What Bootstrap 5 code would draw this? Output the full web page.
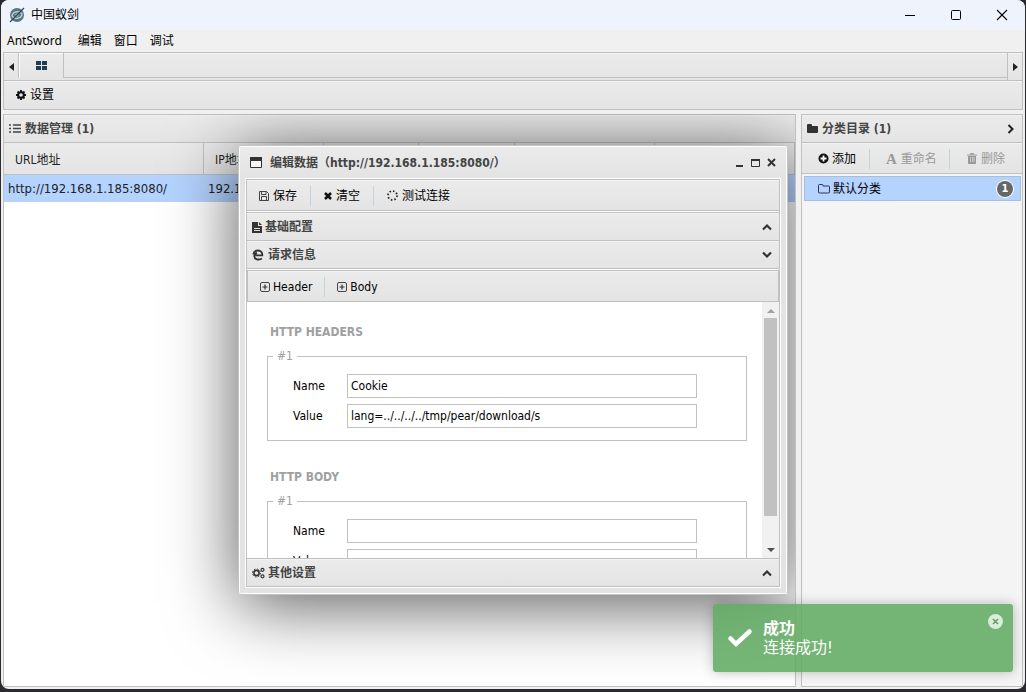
<!DOCTYPE html>
<html lang="zh-CN">
<head>
<meta charset="utf-8">
<meta name="viewport" content="width=device-width, initial-scale=1">
<title>中国蚁剑</title>
<link href="https://cdn.jsdelivr.net/npm/bootstrap@5.3.0/dist/css/bootstrap.min.css" rel="stylesheet">
<style>
:root{--line:#c0c0c0;--sel:#b5d3ff;--ink:#333}
body{background:#2b2b2f;color:#000;font:12px/16px "DejaVu Sans Condensed","Noto Sans CJK SC",sans-serif;height:100vh;overflow:hidden}
svg{display:block;flex:none}
button{background:none;border:0;padding:0;color:inherit;display:flex;align-items:center}
button:disabled{color:#999}
.app-window{background:#f0f0f0;border-radius:8px;overflow:hidden;margin:0 1px 3px}
.app-title{background:#eff3fb;height:30px;font-family:"Noto Sans","Noto Sans CJK SC",sans-serif}
.app-title button{width:46px;height:30px;justify-content:center}
.app-menu{height:22px;gap:12px;padding:0 6px;font-family:"Noto Sans","Noto Sans CJK SC",sans-serif}
.bar{background:linear-gradient(#ebebeb,#e4e4e4);border:1px solid var(--line);box-shadow:inset 0 1px #f3f3f3}
.tab-strip{height:29px}
.tab-arrow{width:15px;justify-content:center}
.tab-on{width:45px;border-left:1px solid #fff;border-right:1px solid var(--line);box-shadow:-1px 0 var(--line),inset 0 1px #fff;justify-content:center;height:25px}
.tab-fill{border-bottom:1px solid var(--line);height:25px}
.tool{height:29px;padding-left:12px}
.hd{height:29px;font-weight:700;color:#444;padding:1px 5px 0}
.pane{border:1px solid var(--line);border-top:0;min-height:0}
.pane>.hd{margin:0 -1px}
.side{width:222px;background:#f4f4f4}
.sep{width:1px;height:20px;background:#bcd8de;flex:none}
.grid{table-layout:fixed;width:100%;border-collapse:separate;border-spacing:0;font-size:13px}
.grid th{font:12px/16px "DejaVu Sans Condensed","Noto Sans CJK SC",sans-serif;height:32px;padding:2px 11px 0;background:linear-gradient(#ebebeb,#e4e4e4);border-right:1px solid var(--line);border-bottom:1px solid var(--line);color:#222}
.grid td{background:var(--sel);height:27px;padding:0 4px;color:#222}
.cat{background:var(--sel);border:1px solid #a9bedb;height:25px;padding:0 7px 0 13px;margin:2px 1px 0 2px}
.count{width:16px;height:16px;background:#666;box-shadow:0 0 0 1px #fff;border-radius:8px;color:#fff;font-size:11px;font-weight:700;line-height:16px;text-align:center}
.dlg{left:234px;top:31px;width:550px;height:450px;background:linear-gradient(#ebebeb,#e3e3e3 34px);border:1px solid #c4c4c4;border-radius:3px;box-shadow:inset 0 0 0 1px #fff,0 10px 70px rgba(0,0,0,.65);padding:0 7px 7px}
.dlg-title{height:33px;padding:0 4px;color:#444;font-weight:700}
.dlg-title button{margin-left:7px}
.dlg-body{outline:1px solid #fff;background:#fff;border:1px solid var(--line);min-height:0}
.dlg-body>.bar{margin:0 -1px}
.dlg-body>.bar:first-child{margin-top:-1px}
.dlg .tool{height:32px;padding-top:1px}
.dlg .hd{padding-right:7px}
.form-area{overflow:hidden;padding:22px 15px 0 20px}
.form-area h2{font-size:12px;line-height:16px;font-weight:700;color:#a0a0a0;margin:0 0 8px 3px}
.form-area fieldset{border:1px solid var(--line);padding:10px 25px 12px;margin-bottom:28px;height:93px}
.form-area legend{float:none;width:auto;font-size:12px;line-height:16px;color:#a0a0a0;padding:0 4px;margin:0 0 0 -20px}
.field{height:24px;margin-bottom:6px}
.field label{width:54px;flex:none}
.field input{width:350px;height:24px;border:1px solid var(--line);border-radius:0;padding:0 3px;font-size:12px;color:#000;background:#fff}
.sb{width:17px;background:#f1f1f1;padding:7px 0 6px}
.sb i{width:13px;height:198px;background:#c1c1c1;margin-top:5px}
.done{right:12px;bottom:17px;width:300px;height:68px;background:rgba(96,170,96,.87);border-radius:3px;box-shadow:0 0 12px rgba(0,0,0,.25);color:#fff;font-size:16px;line-height:19px;padding:0 10px 0 14px}
</style>
</head>
<body class="d-flex flex-column">
<svg width="0" height="0" class="position-absolute"><defs>
<symbol id="up" viewBox="0 0 10 8"><path d="M1 6.500 5 2.500 9 6.500" fill="none" stroke="#333" stroke-width="2.200"/></symbol>
<symbol id="plus" viewBox="0 0 10 10"><rect x=".5" y=".5" width="9" height="9" rx="1.500" fill="none" stroke="#444"/><path d="M5 2.500v5M2.500 5h5" stroke="#333" stroke-width="1.200"/></symbol>
</defs></svg>
<div class="app-window d-flex flex-column flex-grow-1 position-relative">
  <header class="app-title d-flex align-items-center flex-shrink-0">
    <svg class="ms-2" width="16" height="16" viewBox="0 0 16 16"><circle cx="8" cy="8" r="7" fill="#567783"/><path d="M3 9.500c0-5 7-6.500 9.500-3M13 6.500c0 5-7 6.500-9.500 3" fill="none" stroke="#c6d3d8" stroke-width="1.300"/><circle cx="8" cy="8" r="1.800" fill="#a9bdc4"/><path d="M1 15 15 1" stroke="#33444c" stroke-width="1.200"/></svg>
    <span class="flex-grow-1" style="padding-left:6px">中国蚁剑</span>
    <button aria-label="最小化"><svg width="12" height="12"><path d="M1 6.500h10" stroke="#000"/></svg></button>
    <button aria-label="最大化"><svg width="12" height="12"><rect x="1.500" y="1.500" width="9" height="9" rx="1" fill="none" stroke="#000"/></svg></button>
    <button aria-label="关闭"><svg width="12" height="12"><path d="M1 1 11 11M11 1 1 11" stroke="#000" stroke-width="1.100"/></svg></button>
  </header>
  <nav class="app-menu d-flex align-items-center flex-shrink-0">
    <button>AntSword</button><button class="ms-1">编辑</button><button>窗口</button><button>调试</button>
  </nav>
  <main class="d-flex flex-column flex-grow-1" style="margin:0 2px 2px;min-height:0">
    <div class="bar tab-strip d-flex flex-shrink-0">
      <button class="tab-arrow" aria-label="左"><svg width="5" height="8"><path d="M5 0v8L0 4z" fill="#222"/></svg></button>
      <button class="tab-on" aria-label="主页"><svg width="12" height="10"><path d="M0 0h5v4H0zM6 0h5v4H6zM0 5h5v4H0zM6 5h5v4H6z" fill="#1f3c52"/></svg></button>
      <div class="tab-fill flex-grow-1"></div>
      <button class="tab-arrow" style="border-left:1px solid var(--line)" aria-label="右"><svg width="5" height="8"><path d="M0 0v8l5-4z" fill="#222"/></svg></button>
    </div>
    <div class="bar tool d-flex flex-shrink-0 border-top-0">
      <button style="gap:4px"><svg width="10" height="10" viewBox="0 0 10 10"><circle cx="5" cy="5" r="2.800" fill="none" stroke="#111" stroke-width="2"/><path d="M5 0v2M5 8v2M0 5h2M8 5h2M1.500 1.500l1.300 1.300M7.200 7.200l1.300 1.300M8.500 1.500 7.200 2.800M2.800 7.200 1.500 8.500" stroke="#111" stroke-width="1.900"/></svg>设置</button>
    </div>
    <div class="d-flex flex-grow-1" style="gap:5px;margin-top:4px;min-height:0">
      <section class="pane flex-grow-1 bg-white position-relative overflow-hidden" style="min-width:0">
        <div class="bar hd d-flex align-items-center gap-1">
          <svg width="12" height="10"><path d="M0 1h2M0 4.500h2M0 8h2M4 1h8M4 4.500h8M4 8h8" stroke="#444" stroke-width="1.600"/></svg>数据管理 (1)
        </div>
        <table class="grid"><colgroup><col style="width:200px"><col style="width:120px"><col style="width:95px"><col style="width:96px"><col style="width:140px"><col></colgroup>
          <thead><tr><th>URL地址</th><th>IP地址</th><th></th><th></th><th></th><th></th></tr></thead>
          <tbody><tr><td>http://192.168.1.185:8080/</td><td>192.168.1.185</td><td></td><td></td><td></td><td></td></tr></tbody>
        </table>

        <div class="dlg position-absolute d-flex flex-column" role="dialog" aria-label="编辑数据">
          <div class="dlg-title d-flex align-items-center flex-shrink-0">
            <svg width="12" height="11"><path d="M.5.5h11v10H.5z" fill="#f5f5f5" stroke="#333"/><path d="M0 0h12v4H0z" fill="#333"/></svg>
            <span class="flex-grow-1 text-nowrap" style="padding-left:8px">编辑数据（http://192.168.1.185:8080/）</span>
            <button aria-label="折叠"><svg width="8" height="9"><path d="M0 8h7" stroke="#333" stroke-width="2"/></svg></button>
            <button aria-label="放大"><svg width="9" height="8"><path d="M.5 1h8v6.500h-8z" fill="none" stroke="#333"/><path d="M0 1h9" stroke="#333" stroke-width="2"/></svg></button>
            <button aria-label="关闭对话框"><svg width="9" height="9"><path d="M1 1 8 8M8 1 1 8" stroke="#333" stroke-width="2"/></svg></button>
          </div>
          <div class="dlg-body d-flex flex-column flex-grow-1">
            <div class="bar tool d-flex align-items-center flex-shrink-0">
              <button style="gap:4px"><svg width="10" height="10"><path d="M.5.5h7l2 2v7h-9zM2.500.500v3h4.500v-3M2.500 9.500v-4h5v4" fill="none" stroke="#444"/></svg>保存</button>
              <span class="sep" style="margin:0 13px"></span>
              <button style="gap:4px"><svg width="8" height="8"><path d="M1 1 7 7M7 1 1 7" stroke="#111" stroke-width="2.600"/></svg>清空</button>
              <span class="sep" style="margin:0 13px"></span>
              <button style="gap:4px"><svg width="11" height="11"><circle cx="5.500" cy="5.500" r="4.500" fill="none" stroke="#222" stroke-width="1.800" stroke-dasharray="1.500 2.030"/></svg>测试连接</button>
            </div>
            <div class="bar hd d-flex align-items-center flex-shrink-0" style="margin-top:1px">
              <svg width="10" height="11"><path d="M0 0h6v4h4v7H0zM7 0l3 3H7z" fill="#333"/><path d="M2 6.500h6M2 8.500h6" stroke="#ddd"/></svg>
              <span class="flex-grow-1" style="padding-left:3px">基础配置</span><svg width="10" height="8"><use href="#up"/></svg>
            </div>
            <div class="bar hd d-flex align-items-center flex-shrink-0 border-top-0" style="height:28px">
              <svg width="12" height="12" viewBox="0 0 12 12"><path d="M1.200 5.500C1.800 3 3.800 1.500 6 1.500c2.800 0 4.500 2 4.300 4.800H3.500M10 9.500C6.500 11.500 2.300 10.300 2.300 7.200c0-1.800 1.200-2.900 2.700-3.400" fill="none" stroke="#333" stroke-width="1.800"/></svg>
              <span class="flex-grow-1" style="padding-left:4px">请求信息</span><svg width="10" height="8"><g transform="rotate(180 5 4)"><use href="#up"/></g></svg>
            </div>
            <div class="bar tool d-flex align-items-center flex-shrink-0" style="margin:1px 0 0 0">
              <button style="gap:3px"><svg width="10" height="10"><use href="#plus"/></svg>Header</button>
              <span class="sep" style="margin:0 12px"></span>
              <button style="gap:3px"><svg width="10" height="10"><use href="#plus"/></svg>Body</button>
            </div>
            <div class="d-flex flex-grow-1" style="min-height:0">
              <form class="form-area flex-grow-1">
                <h2>HTTP HEADERS</h2>
                <fieldset><legend>#1</legend>
                  <div class="field d-flex align-items-center"><label for="hn">Name</label><input id="hn" value="Cookie"></div>
                  <div class="field d-flex align-items-center"><label for="hv">Value</label><input id="hv" value="lang=../../../../tmp/pear/download/s"></div>
                </fieldset>
                <h2>HTTP BODY</h2>
                <fieldset><legend>#1</legend>
                  <div class="field d-flex align-items-center"><label for="bn">Name</label><input id="bn"></div>
                  <div class="field d-flex align-items-center"><label for="bv">Value</label><input id="bv"></div>
                </fieldset>
              </form>
              <div class="sb d-flex flex-column align-items-center">
                <svg width="8" height="4"><path d="M0 4h8L4 0z" fill="#a0a0a0"/></svg><i></i>
                <svg width="8" height="4" class="mt-auto"><path d="M0 0h8L4 4z" fill="#505050"/></svg>
              </div>
            </div>
            <div class="bar hd d-flex align-items-center flex-shrink-0" style="margin-bottom:-1px">
              <svg width="13" height="12"><circle cx="4.500" cy="6" r="2.600" fill="none" stroke="#333" stroke-width="1.600"/><circle cx="4.500" cy="6" r="4" fill="none" stroke="#333" stroke-dasharray="1.500 1.640"/><circle cx="10.500" cy="2.800" r="1.500" fill="none" stroke="#333" stroke-width="1.200"/><circle cx="10.500" cy="9.300" r="1.500" fill="none" stroke="#333" stroke-width="1.200"/></svg>
              <span class="flex-grow-1" style="padding-left:3px">其他设置</span><svg width="10" height="8"><use href="#up"/></svg>
            </div>
          </div>
        </div>
      </section>

      <section class="pane side flex-shrink-0">
        <div class="bar hd d-flex align-items-center" style="padding-right:7px">
          <svg width="12" height="10"><path d="M0 1q0-1 1-1h3q1 0 1 1v1h5q1 0 1 1v5q0 1-1 1H1q-1 0-1-1z" fill="#333"/></svg>
          <span class="flex-grow-1" style="padding-left:3px">分类目录 (1)</span><svg width="8" height="10"><path d="M1.500 1 5.500 5 1.500 9" fill="none" stroke="#222" stroke-width="2"/></svg>
        </div>
        <div class="bar d-flex align-items-center border-top-0 border-start-0 border-end-0" style="height:31px;padding:1px 0 0 16px">
          <button style="gap:3px"><svg width="11" height="11"><circle cx="5.500" cy="5.500" r="5" fill="#111"/><path d="M5.500 2.500v6M2.500 5.500h6" stroke="#fff" stroke-width="1.800"/></svg>添加</button>
          <span class="sep" style="margin:0 16px 0 13px"></span>
          <button disabled style="gap:4px"><b style="font:700 15px/16px 'Liberation Serif',serif">A</b>重命名</button>
          <span class="sep" style="margin:0 17px 0 12px"></span>
          <button disabled style="gap:4px"><svg width="10" height="11"><path d="M3.500 1.500V.5h3v1M0 2h10M1.500 3v7.500h7V3" fill="#999" stroke="#999"/><path d="M3.500 4v5M5.500 4v5M7 4v5" stroke="#ddd" stroke-width=".7"/></svg>删除</button>
        </div>
        <div class="cat d-flex align-items-center">
          <svg width="12" height="10"><path d="M.5 1.500q0-1 1-1h2.500q1 0 1 1v.5h5.500q1 0 1 1v5q0 1-1 1H1.500q-1 0-1-1z" fill="none" stroke="#335"/></svg>
          <span class="flex-grow-1" style="padding-left:3px">默认分类</span><span class="count">1</span>
        </div>
      </section>
    </div>
  </main>
  <div class="done position-absolute d-flex align-items-center" role="status">
    <svg width="26" height="20"><path d="M3.500 10.500 9 16 22.500 3.500" fill="none" stroke="#fff" stroke-width="4.500" stroke-linecap="round"/></svg>
    <div class="flex-grow-1" style="padding-left:10px"><b class="d-block">成功</b>连接成功!</div>
    <button class="align-self-start" style="margin-top:10px" aria-label="关闭通知"><svg width="15" height="15"><circle cx="7.500" cy="7.500" r="7.500" fill="#dcebdc"/><path d="M5 5 10 10M10 5 5 10" stroke="#5f9f5f" stroke-width="1.500"/></svg></button>
  </div>
</div>
<script src="https://cdn.jsdelivr.net/npm/bootstrap@5.3.0/dist/js/bootstrap.bundle.min.js"></script>
</body>
</html>
